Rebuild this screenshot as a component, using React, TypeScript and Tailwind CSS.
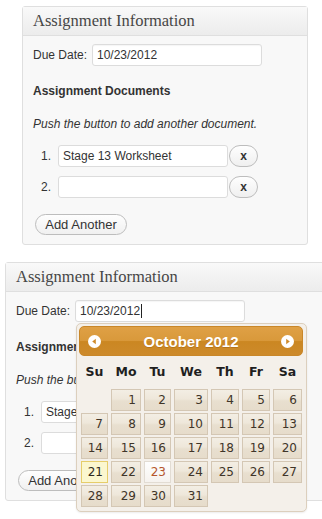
import React from "react";

const sans = "font-['Liberation_Sans',Arial,sans-serif]";

function CalCell({ n }: { n: number | null }) {
  if (n === null) return <div />;
  if (n === 21)
    return (
      <div className="h-[22px] border border-[#e6cd6a] bg-[#fbf7cf] pr-[4px] text-right text-[12px] leading-[20px] text-[#2e2a20]">
        {n}
      </div>
    );
  if (n === 23)
    return (
      <div className="h-[22px] border border-[#e2dcd3] bg-[linear-gradient(to_bottom,#fefefe,#f6f3ef)] pr-[4px] text-right text-[12px] leading-[20px] text-[#b5562c]">
        {n}
      </div>
    );
  return (
    <div className="h-[22px] border border-[#d4c7b4] bg-[linear-gradient(to_bottom,#f3eee4_0%,#eee7da_45%,#e8dfcf_55%,#e6dccb_100%)] pr-[4px] text-right text-[12px] leading-[20px] text-[#3f3529]">
      {n}
    </div>
  );
}

function Calendar() {
  const rows: (number | null)[][] = [
    [null, 1, 2, 3, 4, 5, 6],
    [7, 8, 9, 10, 11, 12, 13],
    [14, 15, 16, 17, 18, 19, 20],
    [21, 22, 23, 24, 25, 26, 27],
    [28, 29, 30, 31, null, null, null],
  ];
  const names = ["Su", "Mo", "Tu", "We", "Th", "Fr", "Sa"];
  const cols = "grid grid-cols-[27px_30px_27px_34px_28px_28px_29px] gap-x-[3px]";
  return (
    <div className="absolute left-[70px] top-[60px] z-10 h-[189px] w-[231px] rounded-[5px] border border-[#dccfbd] bg-[#f4f0ea] pl-[2px] pr-[3px] pt-[2px] font-['DejaVu_Sans',Verdana,sans-serif] shadow-[0_1px_2px_rgba(0,0,0,0.08)]">
      <div className="flex h-[30px] items-center justify-between rounded-[5px] border border-[#c98729] bg-[linear-gradient(to_bottom,#dfa045_0%,#d9993b_48%,#cb8722_52%,#cd8a2b_100%)] px-[8px]">
        <svg width="13" height="13" viewBox="0 0 13 13">
          <circle cx="6.5" cy="6.5" r="6.5" fill="#fff" />
          <path d="M4.2 6.5 L7.8 3.8 L7.8 9.2 Z" fill="#d08c2c" />
        </svg>
        <span className="font-['Liberation_Sans',Arial,sans-serif] text-[15px] font-bold leading-none text-white [text-shadow:0_1px_0_rgba(140,80,0,0.35)]">
          October 2012
        </span>
        <svg width="13" height="13" viewBox="0 0 13 13">
          <circle cx="6.5" cy="6.5" r="6.5" fill="#fff" />
          <path d="M8.8 6.5 L5.2 3.8 L5.2 9.2 Z" fill="#d08c2c" />
        </svg>
      </div>
      <div className="pl-[2px]">
        <div className={`${cols} h-[33px] items-center`}>
          {names.map((d) => (
            <div key={d} className="text-center text-[12.5px] font-bold text-[#1f1f1f]">
              {d}
            </div>
          ))}
        </div>
        <div className="flex flex-col gap-y-[2px]">
          {rows.map((r, i) => (
            <div key={i} className={cols}>
              {r.map((n, j) => (
                <CalCell key={j} n={n} />
              ))}
            </div>
          ))}
        </div>
      </div>
    </div>
  );
}

function Panel({ withCalendar }: { withCalendar?: boolean }) {
  return (
    <div className={`relative rounded-[3px] border border-[#dfdfdf] bg-[#f8f8f8] ${sans} text-[#333]`}>
      <div className="flex h-[29px] items-center border-b border-[#dfdfdf] bg-[linear-gradient(to_bottom,#f9f9f9,#ececec)] pl-[10px] font-['Liberation_Serif',Georgia,serif] text-[16.5px] text-[#464646]">
        Assignment Information
      </div>
      <div className="pl-[10px] pt-[8px] pb-[9px]">
        <div className="flex h-[22px] items-center">
          <span className="w-[59px] text-[12px]">Due Date:</span>
          <div className="flex h-[22px] w-[170px] items-center rounded-[3px] border border-[#dcdcdc] bg-white pl-[4px] text-[12px] shadow-[inset_0_1px_1px_rgba(0,0,0,0.04)]">
            10/23/2012
            {withCalendar && <span className="ml-[1px] inline-block h-[14px] w-px bg-[#222]" />}
          </div>
        </div>
        <div className="mt-[18px] text-[12px] font-bold leading-[14px]">Assignment Documents</div>
        <div className="mt-[19px] text-[12px] italic leading-[14px]">Push the button to add another document.</div>
        <div className="mt-[14px] flex flex-col gap-y-[9px]">
          {["Stage 13 Worksheet", ""].map((v, i) => (
            <div key={i} className="flex h-[22px] items-center">
              <span className="w-[25px] pl-[8px] text-[12px]">{i + 1}.</span>
              <div className="flex h-[22px] w-[170px] items-center rounded-[3px] border border-[#dcdcdc] bg-white pl-[4px] text-[12px]">
                {v}
              </div>
              <div className="ml-[1px] flex h-[22px] w-[29px] items-center justify-center rounded-full border border-[#bdbdbd] bg-[linear-gradient(to_bottom,#fefefe,#efefef)] text-[12px] font-bold leading-none text-[#333]">
                x
              </div>
            </div>
          ))}
        </div>
        <div className="ml-[2px] mt-[16px] flex h-[21px] w-[92px] items-center justify-center rounded-full border border-[#bdbdbd] bg-[linear-gradient(to_bottom,#fefefe,#f0f0f0)] text-[13px] text-[#333]">
          Add Another
        </div>
      </div>
      {withCalendar && <Calendar />}
    </div>
  );
}

export default function App() {
  return (
    <div className="h-[519px] w-[322px] overflow-hidden bg-white">
      <div className="ml-[22px] mt-[6px] w-[286px]">
        <Panel />
      </div>
      <div className="ml-[5px] mt-[17px] w-[330px]">
        <Panel withCalendar />
      </div>
    </div>
  );
}
